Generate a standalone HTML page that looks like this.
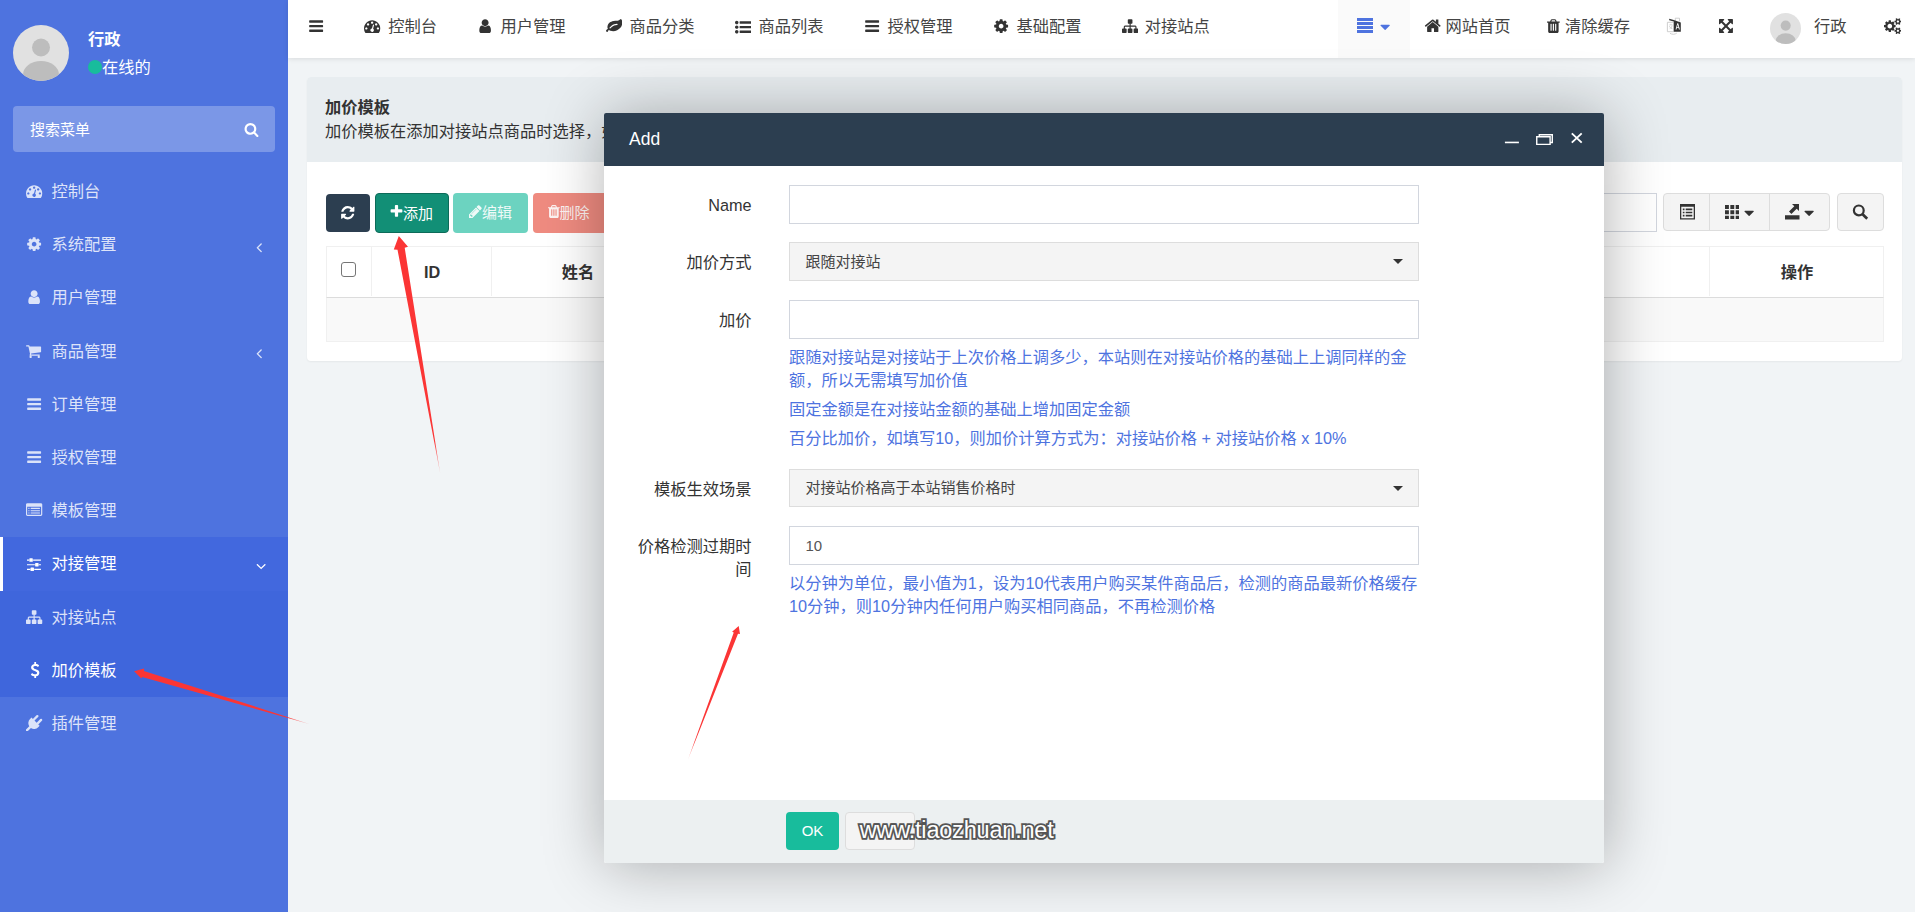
<!DOCTYPE html>
<html lang="zh-CN">
<head>
<meta charset="utf-8">
<title>加价模板</title>
<style>
*{box-sizing:border-box;}
html,body{margin:0;padding:0;}
body{width:1915px;height:912px;overflow:hidden;position:relative;background:#f1f4f6;
  font-family:"Liberation Sans","Noto Sans CJK SC",sans-serif;font-size:16.25px;color:#333;}
svg{display:block;}
.abs{position:absolute;}
.t{position:absolute;white-space:nowrap;}
/* ---------- sidebar ---------- */
#sidebar{position:absolute;left:0;top:0;width:288px;height:912px;background:#4e73df;color:#fff;}
#avatar{position:absolute;left:13px;top:25px;width:56px;height:56px;border-radius:50%;background:#e1e1e1;overflow:hidden;}
#uname{position:absolute;left:88px;top:28px;font-weight:bold;font-size:16.25px;line-height:22px;color:#fff;}
#ustat{position:absolute;left:88px;top:56px;font-size:16.25px;line-height:22px;color:#fff;white-space:nowrap;}
#ustat i{position:absolute;left:0;top:4px;width:14px;height:14px;border-radius:50%;background:#18bc9c;}
#ustat span{position:absolute;left:14px;top:0;}
#msearch{position:absolute;left:13px;top:106px;width:262px;height:46px;border-radius:4px;background:rgba(255,255,255,0.26);}
#msearch span{position:absolute;left:17px;top:13.600px;font-size:15px;line-height:20px;color:#fff;}
#menu{position:absolute;left:0;top:165px;width:288px;margin:0;padding:0;list-style:none;}
#menu li{position:relative;height:53.2px;line-height:53.2px;font-size:16.25px;color:rgba(255,255,255,0.82);padding-left:51.500px;white-space:nowrap;}
#menu li.act{background:#4268de;color:#fff;}
#menu li.act:before{content:"";position:absolute;left:0;top:0;width:3px;height:100%;background:#fff;}
#menu li.sub{background:#3f66dc;}
#menu li.cur{color:#fff;}
/* ---------- top nav ---------- */
#topnav{position:absolute;left:288px;top:0;width:1627px;height:58px;background:#fff;box-shadow:0 1px 5px rgba(0,0,0,0.1);}
.it{position:absolute;top:0;height:54px;line-height:52.800px;font-size:16.25px;color:#444;white-space:nowrap;}
/* ---------- panel ---------- */
#panel{position:absolute;left:307px;top:77px;width:1595px;height:284px;background:#fff;border-radius:4px;box-shadow:0 1px 2px rgba(0,0,0,0.05);}
#phead{position:absolute;left:0;top:0;width:100%;height:85px;background:#e8edf0;border-radius:4px 4px 0 0;}
#phead b{position:absolute;left:18px;top:19px;font-size:16.25px;line-height:22px;color:#333;}
#phead span{position:absolute;left:18px;top:43px;font-size:16.25px;line-height:22px;color:#333;white-space:nowrap;}
.btn{position:absolute;border-radius:4px;color:#fff;font-size:15px;white-space:nowrap;}
.btn span{position:absolute;top:0;line-height:40px;}
.tb{position:absolute;top:193px;height:38px;background:#f4f4f4;border:1px solid #ddd;}
.th{position:absolute;top:247px;height:50px;line-height:51px;font-weight:bold;font-size:16.25px;color:#333;text-align:center;}
/* ---------- modal ---------- */
#modal{position:absolute;left:604px;top:113px;width:1000px;height:750px;background:#fff;border-radius:2px;
  box-shadow:1.25px 1.25px 62px rgba(0,0,0,0.3);}
#mtitle{position:absolute;left:0;top:0;width:1000px;height:52.5px;background:#2c3e50;color:#fff;border-radius:2px 2px 0 0;}
#mtitle span{position:absolute;left:25px;top:0;line-height:52px;font-size:17.5px;color:#fff;}
#mfoot{position:absolute;left:0;top:687px;width:1000px;height:63px;background:#ecf0f1;border-radius:0 0 2px 2px;}
.lab{position:absolute;left:0;width:147.5px;text-align:right;font-size:16.25px;line-height:23.2px;color:#333;}
.inp{position:absolute;left:185px;width:630px;height:39px;border:1px solid #d2d6de;background:#fff;font-size:15px;line-height:37px;padding-left:15.5px;color:#555;}
.inp.sel{background:#f4f4f4;border-color:#ddd;color:#444;}
.inp.sel:after{content:"";position:absolute;right:15px;top:16px;border:5.5px solid transparent;border-top:5.5px solid #333;border-bottom:0;}
.help{position:absolute;left:185px;width:636px;font-size:16.25px;line-height:23.2px;color:#4e73df;}
#ok{position:absolute;left:182px;top:12px;width:53px;height:38px;background:#18bc9c;border-radius:4px;color:#fff;font-size:15px;line-height:38px;text-align:center;}
#reset{position:absolute;left:240.5px;top:12px;width:70px;height:37.5px;background:#f4f4f4;border:1px solid #ddd;border-radius:4px;}
#wm{position:absolute;left:255.700px;top:13.700px;font-size:23.5px;line-height:32px;color:#fff;white-space:nowrap;
  -webkit-text-stroke:3.6px #555;paint-order:stroke fill;letter-spacing:-0.2px;}
#arrows{position:absolute;left:0;top:0;width:1915px;height:912px;pointer-events:none;}
</style>
</head>
<body>

<!-- SIDEBAR -->
<div id="sidebar">
  <div id="avatar">
    <svg width="56" height="56" viewBox="0 0 56 56"><circle cx="28" cy="22.5" r="9" fill="#bdbdbd"/><ellipse cx="28" cy="50" rx="18" ry="14" fill="#bdbdbd"/></svg>
  </div>
  <div id="uname">行政</div>
  <div id="ustat"><i></i><span>在线的</span></div>
  <div id="msearch"><span>搜索菜单</span><svg class="fa" style="position:absolute;left:230.5px;top:15.5px;" width="15" height="15" viewBox="0 0 1792 1792"><path fill="#fff" d="M1216 832q0-185-131.500-316.500t-316.500-131.500-316.500 131.500-131.500 316.500 131.500 316.500 316.500 131.500 316.500-131.500 131.500-316.500zM1728 1664q0 52-38 90t-90 38q-54 0-90-38l-343-342q-179 124-399 124-143 0-273.500-55.500t-225-150-150-225-55.500-273.500 55.500-273.500 150-225 225-150 273.500-55.500 273.500 55.500 225 150 150 225 55.500 273.500q0 220-124 399l343 343q37 37 37 90z"/></svg></div>
  <ul id="menu">
    <li><svg class="fa" style="position:absolute;left:26.3px;top:18px;" width="16.25" height="16.25" viewBox="0 0 1792 1792"><path fill="#dbe3f9" d="M384 1152q0-53-37.500-90.500t-90.500-37.500-90.500 37.500-37.500 90.500 37.500 90.500 90.500 37.500 90.500-37.500 37.500-90.500zM576 704q0-53-37.500-90.500t-90.500-37.500-90.500 37.500-37.500 90.500 37.500 90.500 90.500 37.500 90.500-37.500 37.500-90.500zM1004 1185l101-382q6-26-7.500-48.500t-38.500-29.500-48 6.500-30 39.500l-101 382q-60 5-107 43.500t-63 98.500q-20 77 20 146t117 89 146-20 89-117q16-60-6-117t-72-91zM1664 1152q0-53-37.500-90.500t-90.500-37.500-90.500 37.500-37.500 90.500 37.500 90.500 90.500 37.500 90.500-37.500 37.500-90.500zM1024 512q0-53-37.500-90.500t-90.500-37.500-90.500 37.500-37.500 90.500 37.500 90.500 90.500 37.500 90.500-37.500 37.500-90.500zM1472 704q0-53-37.500-90.500t-90.500-37.500-90.500 37.500-37.500 90.500 37.500 90.500 90.500 37.500 90.500-37.500 37.500-90.500zM1792 1152q0 261-141 483-19 29-54 29h-1402q-35 0-54-29-141-221-141-483 0-182 71-348t191-286 286-191 348-71 348 71 286 191 191 286 71 348z"/></svg>控制台</li>
    <li><svg class="fa" style="position:absolute;left:26.3px;top:18px;" width="16.25" height="16.25" viewBox="0 0 1792 1792"><path fill="#dbe3f9" d="M1152 896q0-106-75-181t-181-75-181 75-75 181 75 181 181 75 181-75 75-181zM1664 787v222q0 12-8 23t-20 13l-185 28q-19 54-39 91 35 50 107 138 10 12 10 25t-9 23q-27 37-99 108t-94 71q-12 0-26-9l-138-108q-44 23-91 38-16 136-29 186-7 28-36 28h-222q-14 0-24.500-8.500t-11.500-21.500l-28-184q-49-16-90-37l-141 107q-10 9-25 9-14 0-25-11-126-114-165-168-7-10-7-23 0-12 8-23 15-21 51-66.500t54-70.500q-27-50-41-99l-183-27q-13-2-21-12.500t-8-23.500v-222q0-12 8-23t19-13l186-28q14-46 39-92-40-57-107-138-10-12-10-24 0-10 9-23 26-36 98.500-107.500t94.500-71.500q13 0 26 10l138 107q44-23 91-38 16-136 29-186 7-28 36-28h222q14 0 24.500 8.500t11.500 21.500l28 184q49 16 90 37l142-107q9-9 24-9 13 0 25 10 129 119 165 170 7 8 7 22 0 12-8 23-15 21-51 66.500t-54 70.500q26 50 41 98l183 28q13 2 21 12.500t8 23.500z"/></svg>系统配置<svg class="fa" style="position:absolute;left:251.300px;top:20.800px;" width="16.25" height="16.25" viewBox="0 0 1792 1792"><path fill="#dbe3f9" d="M1203 544q0 13-10 23l-393 393 393 393q10 10 10 23t-10 23l-50 50q-10 10-23 10t-23-10l-466-466q-10-10-10-23t10-23l466-466q10-10 23-10t23 10l50 50q10 10 10 23z"/></svg></li>
    <li><svg class="fa" style="position:absolute;left:26.3px;top:18px;" width="16.25" height="16.25" viewBox="0 0 1792 1792"><path fill="#dbe3f9" d="M1536 1399q0 109-62.500 187t-150.500 78h-854q-88 0-150.500-78t-62.500-187q0-85 8.500-160.500t31.500-152 58.500-131 94-89 134.500-34.500q131 128 313 128t313-128q76 0 134.500 34.500t94 89 58.500 131 31.500 152 8.500 160.500zM1280 512q0 159-112.500 271.500t-271.500 112.500-271.500-112.500-112.500-271.500 112.500-271.500 271.500-112.500 271.500 112.500 112.500 271.500z"/></svg>用户管理</li>
    <li><svg class="fa" style="position:absolute;left:26.3px;top:18px;" width="16.25" height="16.25" viewBox="0 0 1792 1792"><path fill="#dbe3f9" d="M640 1536q0 52-38 90t-90 38-90-38-38-90 38-90 90-38 90 38 38 90zM1536 1536q0 52-38 90t-90 38-90-38-38-90 38-90 90-38 90 38 38 90zM1664 448v512q0 24-16.500 42.500t-40.500 21.500l-1044 122q13 60 13 70 0 16-24 64h920q26 0 45 19t19 45-19 45-45 19h-1024q-26 0-45-19t-19-45q0-11 8-31.500t16-36 21.500-40 15.500-29.500l-177-823h-204q-26 0-45-19t-19-45 19-45 45-19h256q16 0 28.500 6.500t19.500 15.500 13 24.500 8 26 5.500 29.500 4.500 26h1201q26 0 45 19t19 45z"/></svg>商品管理<svg class="fa" style="position:absolute;left:251.300px;top:20.800px;" width="16.25" height="16.25" viewBox="0 0 1792 1792"><path fill="#dbe3f9" d="M1203 544q0 13-10 23l-393 393 393 393q10 10 10 23t-10 23l-50 50q-10 10-23 10t-23-10l-466-466q-10-10-10-23t10-23l466-466q10-10 23-10t23 10l50 50q10 10 10 23z"/></svg></li>
    <li><svg class="fa" style="position:absolute;left:26.3px;top:18px;" width="16.25" height="16.25" viewBox="0 0 1792 1792"><path fill="#dbe3f9" d="M1664 1344v128q0 26-19 45t-45 19H192q-26 0-45-19t-19-45v-128q0-26 19-45t45-19h1408q26 0 45 19t19 45zm0-512v128q0 26-19 45t-45 19H192q-26 0-45-19t-19-45V832q0-26 19-45t45-19h1408q26 0 45 19t19 45zm0-512v128q0 26-19 45t-45 19H192q-26 0-45-19t-19-45V320q0-26 19-45t45-19h1408q26 0 45 19t19 45z"/></svg>订单管理</li>
    <li><svg class="fa" style="position:absolute;left:26.3px;top:18px;" width="16.25" height="16.25" viewBox="0 0 1792 1792"><path fill="#dbe3f9" d="M1664 1344v128q0 26-19 45t-45 19H192q-26 0-45-19t-19-45v-128q0-26 19-45t45-19h1408q26 0 45 19t19 45zm0-512v128q0 26-19 45t-45 19H192q-26 0-45-19t-19-45V832q0-26 19-45t45-19h1408q26 0 45 19t19 45zm0-512v128q0 26-19 45t-45 19H192q-26 0-45-19t-19-45V320q0-26 19-45t45-19h1408q26 0 45 19t19 45z"/></svg>授权管理</li>
    <li><svg class="fa" style="position:absolute;left:26.3px;top:18px;" width="16.25" height="16.25" viewBox="0 0 1792 1792"><path fill="#dbe3f9" d="M384 1184v64q0 13-9.500 22.500t-22.500 9.500h-64q-13 0-22.500-9.500t-9.500-22.500v-64q0-13 9.500-22.500t22.500-9.500h64q13 0 22.500 9.500t9.500 22.500zM384 928v64q0 13-9.500 22.500t-22.500 9.500h-64q-13 0-22.500-9.500t-9.500-22.500v-64q0-13 9.500-22.500t22.500-9.500h64q13 0 22.500 9.500t9.500 22.500zM384 672v64q0 13-9.500 22.500t-22.500 9.500h-64q-13 0-22.500-9.500t-9.500-22.500v-64q0-13 9.500-22.500t22.500-9.500h64q13 0 22.500 9.500t9.500 22.500zM1536 1184v64q0 13-9.500 22.500t-22.500 9.500h-960q-13 0-22.500-9.500t-9.500-22.500v-64q0-13 9.500-22.500t22.500-9.500h960q13 0 22.500 9.500t9.500 22.500zM1536 928v64q0 13-9.500 22.500t-22.500 9.500h-960q-13 0-22.500-9.500t-9.500-22.500v-64q0-13 9.500-22.500t22.500-9.500h960q13 0 22.500 9.500t9.500 22.500zM1536 672v64q0 13-9.500 22.500t-22.500 9.500h-960q-13 0-22.500-9.500t-9.500-22.500v-64q0-13 9.500-22.500t22.500-9.500h960q13 0 22.500 9.500t9.500 22.500zM1664 1376v-832q0-13-9.500-22.500t-22.500-9.500h-1472q-13 0-22.500 9.500t-9.500 22.500v832q0 13 9.500 22.500t22.500 9.500h1472q13 0 22.500-9.500t9.500-22.500zM1792 288v1088q0 66-47 113t-113 47h-1472q-66 0-113-47t-47-113v-1088q0-66 47-113t113-47h1472q66 0 113 47t47 113z"/></svg>模板管理</li>
    <li class="act"><svg class="fa" style="position:absolute;left:26.800px;top:18.5px;" width="16.25" height="16.25" viewBox="0 0 1792 1792"><path fill="#fff" d="M352 1408v128h-352v-128h352zM704 1280q26 0 45 19t19 45v256q0 26-19 45t-45 19h-256q-26 0-45-19t-19-45v-256q0-26 19-45t45-19h256zM864 896v128h-864v-128h864zM224 384v128h-224v-128h224zM1536 1408v128h-736v-128h736zM576 256q26 0 45 19t19 45v256q0 26-19 45t-45 19h-256q-26 0-45-19t-19-45v-256q0-26 19-45t45-19h256zM1216 768q26 0 45 19t19 45v256q0 26-19 45t-45 19h-256q-26 0-45-19t-19-45v-256q0-26 19-45t45-19h256zM1536 896v128h-224v-128h224zM1536 384v128h-864v-128h864z"/></svg>对接管理<svg class="fa" style="position:absolute;left:252.800px;top:20.400px;" width="16.25" height="16.25" viewBox="0 0 1792 1792"><path fill="#fff" d="M1395 736q0 13-10 23l-466 466q-10 10-23 10t-23-10l-466-466q-10-10-10-23t10-23l50-50q10-10 23-10t23 10l393 393 393-393q10-10 23-10t23 10l50 50q10 10 10 23z"/></svg></li>
    <li class="sub"><svg class="fa" style="position:absolute;left:26.3px;top:18px;" width="16.25" height="16.25" viewBox="0 0 1792 1792"><path fill="#dbe3f9" d="M1792 1248v320q0 40-28 68t-68 28h-320q-40 0-68-28t-28-68v-320q0-40 28-68t68-28h96v-192h-512v192h96q40 0 68 28t28 68v320q0 40-28 68t-68 28h-320q-40 0-68-28t-28-68v-320q0-40 28-68t68-28h96v-192h-512v192h96q40 0 68 28t28 68v320q0 40-28 68t-68 28h-320q-40 0-68-28t-28-68v-320q0-40 28-68t68-28h96v-192q0-52 38-90t90-38h512v-192h-96q-40 0-68-28t-28-68v-320q0-40 28-68t68-28h320q40 0 68 28t28 68v320q0 40-28 68t-68 28h-96v192h512q52 0 90 38t38 90v192h96q40 0 68 28t28 68z"/></svg>对接站点</li>
    <li class="sub cur"><svg class="fa" style="position:absolute;left:27px;top:18.5px;" width="16.25" height="16.25" viewBox="0 0 1792 1792"><path fill="#fff" d="M1362 1185q0 153-99.500 263.500t-258.500 136.500v175q0 14-9 23t-23 9h-135q-13 0-22.500-9.500t-9.500-22.500v-175q-66-9-127.500-31t-101.500-44.500-74-48-46.500-37.500-17.500-18q-17-21-2-41l103-135q7-10 23-12 15-2 24 9l2 2q113 99 243 125 37 8 74 8 81 0 142.500-43t61.500-122q0-28-15-53t-33.500-42-58.500-37.500-66-32-80-32.500q-39-16-61.500-25t-61.500-26.500-62.500-31-56.500-35.500-53.500-42.500-43.500-49-35.500-58-21-66.500-8.500-78q0-138 98-242t255-134v-180q0-13 9.500-22.500t22.500-9.500h135q14 0 23 9t9 23v176q57 6 110.500 23t87 33.500 63.500 37.500 39 29 15 14q17 18 5 38l-81 146q-8 15-23 16-14 3-27-7-3-3-14.500-12t-39-26.500-58.500-32-74.500-26-85.500-11.500q-95 0-155 43t-60 111q0 26 8.500 48t29.500 41.500 39.500 33 56 31 60.500 27 70 27.500q53 20 81 31.500t76 35 75.500 42.500 62 50 53 63.500 31.500 76.500 13 94z"/></svg>加价模板</li>
    <li><svg class="fa" style="position:absolute;left:26.3px;top:18px;" width="16.25" height="16.25" viewBox="0 0 1792 1792"><path fill="#dbe3f9" d="M1755 453q37 38 37 90.500t-37 90.500l-401 400 150 150-160 160q-163 163-389.500 186.500t-411.500-100.500l-362 362h-181v-181l362-362q-124-185-100.500-411.500t186.500-389.500l160-160 150 150 400-401q38-37 91-37t90 37 37 90.500-37 90.500l-400 401 234 234 401-400q38-37 91-37t90 37z"/></svg>插件管理</li>
  </ul>
</div>

<!-- TOP NAV -->
<div id="topnav">
  <svg class="fa" style="position:absolute;left:19.5px;top:17.800px;" width="16.25" height="16.25" viewBox="0 0 1792 1792"><path fill="#333" d="M1664 1344v128q0 26-19 45t-45 19H192q-26 0-45-19t-19-45v-128q0-26 19-45t45-19h1408q26 0 45 19t19 45zm0-512v128q0 26-19 45t-45 19H192q-26 0-45-19t-19-45V832q0-26 19-45t45-19h1408q26 0 45 19t19 45zm0-512v128q0 26-19 45t-45 19H192q-26 0-45-19t-19-45V320q0-26 19-45t45-19h1408q26 0 45 19t19 45z"/></svg>
  <svg class="fa" style="position:absolute;left:76.3px;top:18.200px;" width="16.25" height="16.25" viewBox="0 0 1792 1792"><path fill="#333" d="M384 1152q0-53-37.500-90.500t-90.500-37.500-90.500 37.500-37.500 90.500 37.500 90.500 90.500 37.500 90.500-37.500 37.500-90.500zM576 704q0-53-37.500-90.500t-90.500-37.500-90.500 37.500-37.500 90.500 37.500 90.500 90.500 37.500 90.500-37.500 37.500-90.500zM1004 1185l101-382q6-26-7.500-48.500t-38.500-29.500-48 6.500-30 39.500l-101 382q-60 5-107 43.500t-63 98.500q-20 77 20 146t117 89 146-20 89-117q16-60-6-117t-72-91zM1664 1152q0-53-37.500-90.500t-90.500-37.500-90.500 37.500-37.500 90.500 37.500 90.500 90.500 37.500 90.500-37.500 37.500-90.500zM1024 512q0-53-37.500-90.500t-90.500-37.500-90.500 37.500-37.500 90.500 37.500 90.500 90.500 37.500 90.500-37.500 37.500-90.500zM1472 704q0-53-37.500-90.500t-90.500-37.500-90.500 37.500-37.500 90.500 37.500 90.500 90.500 37.500 90.500-37.500 37.500-90.500zM1792 1152q0 261-141 483-19 29-54 29h-1402q-35 0-54-29-141-221-141-483 0-182 71-348t191-286 286-191 348-71 348 71 286 191 191 286 71 348z"/></svg><div class="it" style="left:100.3px">控制台</div>
  <svg class="fa" style="position:absolute;left:188.900px;top:18.200px;" width="16.25" height="16.25" viewBox="0 0 1792 1792"><path fill="#333" d="M1536 1399q0 109-62.500 187t-150.500 78h-854q-88 0-150.500-78t-62.500-187q0-85 8.500-160.500t31.500-152 58.500-131 94-89 134.500-34.500q131 128 313 128t313-128q76 0 134.500 34.500t94 89 58.500 131 31.500 152 8.500 160.500zM1280 512q0 159-112.500 271.500t-271.500 112.500-271.500-112.500-112.500-271.500 112.500-271.500 271.500-112.500 271.500 112.500 112.500 271.500z"/></svg><div class="it" style="left:212.6px">用户管理</div>
  <svg class="fa" style="position:absolute;left:318.2px;top:18.200px;" width="16.25" height="16.25" viewBox="0 0 1792 1792"><path fill="#333" d="M1280 704q0-26-19-45t-45-19q-172 0-318 49.500t-259.500 134-235.500 219.500q-19 21-19 45 0 26 19 45t45 19q24 0 45-19 27-24 74-71t67-66q137-124 268.500-176t313.500-52q26 0 45-19t19-45zM1792 506q0 95-20 193-46 224-184.500 383t-357.500 268q-214 108-438 108-148 0-286-47-15-5-88-42t-96-37q-16 0-39.500 32t-45 70-52.500 70-60 32q-43 0-63.500-17.500t-45.500-59.500q-2-4-6-11t-5.500-10-3-9.500-1.500-13.500q0-35 31-73.500t68-65.500 68-56 31-48q0-4-14-38t-16-44q-9-51-9-104 0-115 43.500-220t119-184.500 170.500-139 204-95.500q55-18 145-25.500t179.500-9 178.500-6 163.500-24 113.500-56.500l29.500-29.500t29.500-28 27-20 36.500-16 43.500-4.500q39 0 70.500 46t47.500 112 24 124 8 96z"/></svg><div class="it" style="left:341.6px">商品分类</div>
  <svg class="fa" style="position:absolute;left:447.2px;top:18.800px;" width="16.25" height="16.25" viewBox="0 0 1792 1792"><path fill="#333" d="M384 1408q0 80-56 136t-136 56-136-56-56-136 56-136 136-56 136 56 56 136zM384 896q0 80-56 136t-136 56-136-56-56-136 56-136 136-56 136 56 56 136zM1792 1312v192q0 13-9.500 22.500t-22.500 9.500h-1216q-13 0-22.500-9.500t-9.500-22.500v-192q0-13 9.500-22.500t22.500-9.500h1216q13 0 22.500 9.500t9.500 22.500zM384 384q0 80-56 136t-136 56-136-56-56-136 56-136 136-56 136 56 56 136zM1792 800v192q0 13-9.500 22.500t-22.500 9.500h-1216q-13 0-22.500-9.500t-9.500-22.500v-192q0-13 9.500-22.500t22.500-9.500h1216q13 0 22.500 9.500t9.500 22.500zM1792 288v192q0 13-9.500 22.500t-22.500 9.500h-1216q-13 0-22.500-9.500t-9.500-22.500v-192q0-13 9.500-22.500t22.500-9.500h1216q13 0 22.500 9.500t9.500 22.500z"/></svg><div class="it" style="left:470.6px">商品列表</div>
  <svg class="fa" style="position:absolute;left:576px;top:18.200px;" width="16.25" height="16.25" viewBox="0 0 1792 1792"><path fill="#333" d="M1664 1344v128q0 26-19 45t-45 19H192q-26 0-45-19t-19-45v-128q0-26 19-45t45-19h1408q26 0 45 19t19 45zm0-512v128q0 26-19 45t-45 19H192q-26 0-45-19t-19-45V832q0-26 19-45t45-19h1408q26 0 45 19t19 45zm0-512v128q0 26-19 45t-45 19H192q-26 0-45-19t-19-45V320q0-26 19-45t45-19h1408q26 0 45 19t19 45z"/></svg><div class="it" style="left:599.5px">授权管理</div>
  <svg class="fa" style="position:absolute;left:704.7px;top:18.200px;" width="16.25" height="16.25" viewBox="0 0 1792 1792"><path fill="#333" d="M1152 896q0-106-75-181t-181-75-181 75-75 181 75 181 181 75 181-75 75-181zM1664 787v222q0 12-8 23t-20 13l-185 28q-19 54-39 91 35 50 107 138 10 12 10 25t-9 23q-27 37-99 108t-94 71q-12 0-26-9l-138-108q-44 23-91 38-16 136-29 186-7 28-36 28h-222q-14 0-24.500-8.500t-11.500-21.500l-28-184q-49-16-90-37l-141 107q-10 9-25 9-14 0-25-11-126-114-165-168-7-10-7-23 0-12 8-23 15-21 51-66.500t54-70.500q-27-50-41-99l-183-27q-13-2-21-12.500t-8-23.500v-222q0-12 8-23t19-13l186-28q14-46 39-92-40-57-107-138-10-12-10-24 0-10 9-23 26-36 98.500-107.500t94.500-71.500q13 0 26 10l138 107q44-23 91-38 16-136 29-186 7-28 36-28h222q14 0 24.500 8.500t11.500 21.500l28 184q49 16 90 37l142-107q9-9 24-9 13 0 25 10 129 119 165 170 7 8 7 22 0 12-8 23-15 21-51 66.500t-54 70.500q26 50 41 98l183 28q13 2 21 12.500t8 23.500z"/></svg><div class="it" style="left:728.5px">基础配置</div>
  <svg class="fa" style="position:absolute;left:833.7px;top:18.200px;" width="16.25" height="16.25" viewBox="0 0 1792 1792"><path fill="#333" d="M1792 1248v320q0 40-28 68t-68 28h-320q-40 0-68-28t-28-68v-320q0-40 28-68t68-28h96v-192h-512v192h96q40 0 68 28t28 68v320q0 40-28 68t-68 28h-320q-40 0-68-28t-28-68v-320q0-40 28-68t68-28h96v-192h-512v192h96q40 0 68 28t28 68v320q0 40-28 68t-68 28h-320q-40 0-68-28t-28-68v-320q0-40 28-68t68-28h96v-192q0-52 38-90t90-38h512v-192h-96q-40 0-68-28t-28-68v-320q0-40 28-68t68-28h320q40 0 68 28t28 68v320q0 40-28 68t-68 28h-96v192h512q52 0 90 38t38 90v192h96q40 0 68 28t28 68z"/></svg><div class="it" style="left:856.8px">对接站点</div>
  <div class="abs" style="left:1050px;top:0;width:72px;height:57.500px;background:#fafafa"></div>
  <svg class="abs" style="left:1069px;top:18px" width="16" height="15" viewBox="0 0 16 15"><path fill="#4e73df" d="M0 0h16v3.050H0zM0 3.980h16v3.050H0zM0 7.960h16v3.050H0zM0 11.950h16v3.050H0z"/></svg>
  <svg class="fa" style="position:absolute;left:1088.5px;top:18.5px;" width="16.25" height="16.25" viewBox="0 0 1792 1792"><path fill="#4e73df" d="M1408 704q0 26-19 45l-448 448q-19 19-45 19t-45-19l-448-448q-19-19-19-45t19-45 45-19h896q26 0 45 19t19 45z"/></svg>
  <svg class="fa" style="position:absolute;left:1135.700px;top:16.500px;" width="17.5" height="17.5" viewBox="0 0 1792 1792"><path fill="#333" d="M1472 992v480q0 26-19 45t-45 19h-384v-384h-256v384h-384q-26 0-45-19t-19-45v-480q0-1 .5-3t.5-3l575-474 575 474q1 2 1 6zM1695 923l-62 74q-8 9-21 11h-3q-13 0-21-7l-692-577-692 577q-12 8-24 7-13-2-21-11l-62-74q-8-10-7-23.500t11-21.500l719-599q32-26 76-26t76 26l244 204v-195q0-14 9-23t23-9h192q14 0 23 9t9 23v408l219 182q10 8 11 21.500t-7 23.500z"/></svg><div class="it" style="left:1157.5px">网站首页</div>
  <svg class="fa" style="position:absolute;left:1259px;top:18.200px;" width="16.25" height="16.25" viewBox="0 0 1792 1792"><path fill="#333" d="M512 1376v-704q0-14-9-23t-23-9h-64q-14 0-23 9t-9 23v704q0 14 9 23t23 9h64q14 0 23-9t9-23zm256 0v-704q0-14-9-23t-23-9h-64q-14 0-23 9t-9 23v704q0 14 9 23t23 9h64q14 0 23-9t9-23zm256 0v-704q0-14-9-23t-23-9h-64q-14 0-23 9t-9 23v704q0 14 9 23t23 9h64q14 0 23-9t9-23zm-544-992h448l-48-117q-7-9-17-11h-317q-10 2-17 11zm928 32v64q0 14-9 23t-23 9h-96v948q0 83-47 143.500t-113 60.500h-832q-66 0-113-58.500t-47-141.500v-952h-96q-14 0-23-9t-9-23v-64q0-14 9-23t23-9h309l70-167q15-37 54-63t79-26h320q40 0 79 26t54 63l70 167h309q14 0 23 9t9 23z"/></svg><div class="it" style="left:1277px">清除缓存</div>
  <!-- language icon -->
  <svg class="abs" style="left:1378px;top:17px" width="17" height="19" viewBox="0 0 17 19">
    <path fill="none" stroke="#c9c9c9" stroke-width="0.9" d="M1.400 5.300h6.400v9.400H1.400zM9.300 4.200V1.200h4.200v3.300M4 16.300c1.800 1.300 5 1.300 6.800-.2"/>
    <path fill="#cfcfcf" d="M3.300 7.600h3.200v.7H3.300zM4.600 6.800h.7v1.200h-.7zM3.400 11.600c1.300-.7 2.200-1.800 2.500-3.300l.7.150c-.35 1.700-1.350 3-2.850 3.800zM3.600 8.700c.5 1.300 1.500 2.300 2.900 2.800l-.3.650c-1.550-.6-2.700-1.750-3.250-3.200z"/>
    <path fill="#333" d="M3.200 1.800 7.800 3.100 14.800 5.400V14.800L7.800 14.700V4.400L3.200 3.200z"/>
    <path fill="#fff" d="M11.300 6.300h.9l1.700 6.300h-1l-.35-1.500h-1.700l-.35 1.500h-.95zM11.100 10.200h1.250l-.62-2.600z"/>
  </svg>
  <svg class="fa" style="position:absolute;left:1430.600px;top:18.900px;" width="16.25" height="16.25" viewBox="0 0 1792 1792"><path fill="#333" d="M1283 413l-355 355 355 355 144-144q29-31 70-14 39 17 39 59v448q0 26-19 45t-45 19h-448q-42 0-59-40-17-39 14-69l144-144-355-355-355 355 144 144q31 30 14 69-17 40-59 40h-448q-26 0-45-19t-19-45v-448q0-42 40-59 39-17 69 14l144 144 355-355-355-355-144 144q-19 19-45 19-12 0-24-5-40-17-40-59v-448q0-26 19-45t45-19h448q42 0 59 40 17 39-14 69l-144 144 355 355 355-355-144-144q-31-30-14-69 17-40 59-40h448q26 0 45 19t19 45v448q0 42-39 59-13 5-25 5-26 0-45-19z"/></svg>
  <div class="abs" style="left:1481.7px;top:12.7px;width:31.4px;height:31.4px;border-radius:50%;background:#e1e1e1;overflow:hidden">
    <svg width="31.4" height="31.4" viewBox="0 0 56 56"><circle cx="28" cy="22.5" r="9" fill="#bdbdbd"/><ellipse cx="28" cy="50" rx="18" ry="14" fill="#bdbdbd"/></svg>
  </div>
  <div class="it" style="left:1526px">行政</div>
  <svg class="fa" style="position:absolute;left:1595.900px;top:18.200px;" width="17.4107" height="16.25" viewBox="0 0 1920 1792"><path fill="#333" d="M896 896q0-106-75-181t-181-75-181 75-75 181 75 181 181 75 181-75 75-181zM1664 1408q0-52-38-90t-90-38-90 38-38 90q0 53 37.500 90.500t90.500 37.500 90.500-37.500 37.500-90.500zM1664 384q0-52-38-90t-90-38-90 38-38 90q0 53 37.500 90.500t90.500 37.500 90.500-37.500 37.500-90.500zM1280 805v185q0 10-7 19.500t-16 10.500l-155 24q-11 35-32 76 34 48 90 115 7 11 7 20 0 12-7 19-23 30-82.500 89.500t-78.500 59.500q-11 0-21-7l-115-90q-37 19-77 31-11 108-23 155-7 24-30 24h-186q-11 0-20-7.500t-10-17.500l-23-153q-34-10-75-31l-118 89q-7 7-20 7-11 0-21-8-144-133-144-160 0-9 7-19 10-14 41-53t47-61q-23-44-35-82l-152-24q-10-1-17-9.500t-7-19.500v-185q0-10 7-19.500t16-10.500l155-24q11-35 32-76-34-48-90-115-7-11-7-20 0-12 7-20 22-30 82-89t79-59q11 0 21 7l115 90q34-18 77-32 11-108 23-154 7-24 30-24h186q11 0 20 7.500t10 17.500l23 153q34 10 75 31l118-89q8-7 20-7 11 0 21 8 144 133 144 160 0 8-7 19-12 16-42 54t-45 60q23 48 34 82l152 23q10 2 17 10.500t7 19.500zM1920 1338v140q0 16-149 31-12 27-30 52 51 113 51 138 0 4-4 7-122 71-124 71-8 0-46-47t-52-68q-20 2-30 2t-30-2q-14 21-52 68t-46 47q-2 0-124-71-4-3-4-7 0-25 51-138-18-25-30-52-149-15-149-31v-140q0-16 149-31 13-29 30-52-51-113-51-138 0-4 4-7 4-2 35-20t59-34 30-16q8 0 46 46.500t52 67.500q20-2 30-2t30 2q51-71 92-112l6-2q4 0 124 70 4 3 4 7 0 25-51 138 17 23 30 52 149 15 149 31zM1920 314v140q0 16-149 31-12 27-30 52 51 113 51 138 0 4-4 7-122 71-124 71-8 0-46-47t-52-68q-20 2-30 2t-30-2q-14 21-52 68t-46 47q-2 0-124-71-4-3-4-7 0-25 51-138-18-25-30-52-149-15-149-31v-140q0-16 149-31 13-29 30-52-51-113-51-138 0-4 4-7 4-2 35-20t59-34 30-16q8 0 46 46.500t52 67.500q20-2 30-2t30 2q51-71 92-112l6-2q4 0 124 70 4 3 4 7 0 25-51 138 17 23 30 52 149 15 149 31z"/></svg>
</div>

<!-- PANEL -->
<div id="panel">
  <div id="phead"><b>加价模板</b><span>加价模板在添加对接站点商品时选择，如果对接站点商品价格发生变动，本站将按照模板规则调整</span></div>
</div>
<!-- toolbar buttons (body coords) -->
<div class="btn" style="left:326px;top:194px;width:44px;height:38px;background:#2c3e50"><svg class="fa" style="position:absolute;left:14px;top:11.300px;" width="15.5" height="15.5" viewBox="0 0 1792 1792"><path fill="#fff" d="M1639 1056q0 5-1 7-64 268-268 434.500t-478 166.500q-146 0-282.500-55t-243.500-157l-129 129q-19 19-45 19t-45-19-19-45v-448q0-26 19-45t45-19h448q26 0 45 19t19 45-19 45l-137 137q71 66 161 102t187 36q134 0 250-65t186-179q11-17 53-117 8-23 30-23h192q13 0 22.500 9.500t9.500 22.500zM1664 256v448q0 26-19 45t-45 19h-448q-26 0-45-19t-19-45 19-45l138-138q-148-137-349-137-134 0-250 65t-186 179q-11 17-53 117-8 23-30 23h-199q-13 0-22.500-9.500t-9.500-22.500v-7q65-268 270-434.500t480-166.500q146 0 284 55.500t245 156.500l130-129q19-19 45-19t45 19 19 45z"/></svg></div>
<div class="btn" style="left:375px;top:193px;width:74px;height:40px;background:#128f76;border:1px solid #0d6b59"><svg class="fa" style="position:absolute;left:13.400px;top:9.500px;" width="15" height="15" viewBox="0 0 1792 1792"><path fill="#fff" d="M1600 736v192q0 40-28 68t-68 28h-416v416q0 40-28 68t-68 28h-192q-40 0-68-28t-28-68v-416h-416q-40 0-68-28t-28-68v-192q0-40 28-68t68-28h416v-416q0-40 28-68t68-28h192q40 0 68 28t28 68v416h416q40 0 68 28t28 68z"/></svg><span style="left:27px;line-height:39px">添加</span></div>
<div class="btn" style="left:453px;top:193px;width:75px;height:40px;background:#6cd3c0"><svg class="fa" style="position:absolute;left:15.500px;top:11px;opacity:.9" width="15" height="15" viewBox="0 0 1792 1792"><path fill="#fff" d="M363 1536l91-91-235-235-91 91v107h128v128h107zM886 608q0-22-22-22-10 0-17 7l-542 542q-7 7-7 17 0 22 22 22 10 0 17-7l542-542q7-7 7-17zM832 416l416 416-832 832h-416v-416zM1515 512q0 53-37 90l-166 166-416-416 166-165q36-38 90-38 53 0 91 38l235 234q37 39 37 91z"/></svg><span style="left:29px;opacity:.9">编辑</span></div>
<div class="btn" style="left:533px;top:193px;width:75px;height:40px;background:#ef8b80"><svg class="fa" style="position:absolute;left:14.500px;top:10.800px;opacity:.9" width="15" height="15" viewBox="0 0 1792 1792"><path fill="#fff" d="M512 1376v-704q0-14-9-23t-23-9h-64q-14 0-23 9t-9 23v704q0 14 9 23t23 9h64q14 0 23-9t9-23zm256 0v-704q0-14-9-23t-23-9h-64q-14 0-23 9t-9 23v704q0 14 9 23t23 9h64q14 0 23-9t9-23zm256 0v-704q0-14-9-23t-23-9h-64q-14 0-23 9t-9 23v704q0 14 9 23t23 9h64q14 0 23-9t9-23zm-544-992h448l-48-117q-7-9-17-11h-317q-10 2-17 11zm928 32v64q0 14-9 23t-23 9h-96v948q0 83-47 143.500t-113 60.500h-832q-66 0-113-58.500t-47-141.500v-952h-96q-14 0-23-9t-9-23v-64q0-14 9-23t23-9h309l70-167q15-37 54-63t79-26h320q40 0 79 26t54 63l70 167h309q14 0 23 9t9 23z"/></svg><span style="left:26.500px;opacity:.9">删除</span></div>
<!-- right tools -->
<div class="tb" style="left:1497px;width:160px;background:#fff;border-color:#d2d6de;height:39px"></div>
<div class="tb" style="left:1663px;width:167px;border-radius:4px"></div>
<div class="abs" style="left:1709px;top:193px;width:1px;height:38px;background:#ddd"></div>
<div class="abs" style="left:1769px;top:193px;width:1px;height:38px;background:#ddd"></div>
<svg class="abs" style="left:1680px;top:204px" width="15" height="15.500" viewBox="0 0 15 15.500"><path fill="#333" fill-rule="evenodd" d="M0 0h15v15.500H0zM1.300 2.800v11.400h12.400V2.800z"/><path fill="#333" d="M2.800 4.600h1.700v1.600H2.800zM5.700 4.600h6.600v1.600H5.700zM2.800 7.700h1.700v1.600H2.800zM5.700 7.700h6.600v1.600H5.700zM2.800 10.800h1.700v1.600H2.800zM5.700 10.800h6.600v1.600H5.700z"/></svg>
<svg class="abs" style="left:1724.800px;top:204.800px" width="14.600" height="14.600" viewBox="0 0 14.600 14.600"><path fill="#333" d="M0 0h3.900v3.900H0zM5.350 0h3.900v3.900H5.350zM10.700 0h3.900v3.900h-3.900zM0 5.350h3.900v3.900H0zM5.350 5.350h3.900v3.900H5.350zM10.700 5.350h3.900v3.900h-3.900zM0 10.700h3.900v3.900H0zM5.350 10.700h3.900v3.900H5.350zM10.700 10.700h3.900v3.900h-3.900z"/></svg>
<svg class="fa" style="position:absolute;left:1741.200px;top:204.600px;" width="16.25" height="16.25" viewBox="0 0 1792 1792"><path fill="#333" d="M1408 704q0 26-19 45l-448 448q-19 19-45 19t-45-19l-448-448q-19-19-19-45t19-45 45-19h896q26 0 45 19t19 45z"/></svg>
<svg class="abs" style="left:1785px;top:204px" width="14.500" height="15.500" viewBox="0 0 14.500 15.500"><path fill="#333" d="M0 11.200h14.500v4.300H0zM7 0h7v7l-2.300-2.300-5.300 5.300-2.400-2.400 5.300-5.300z"/></svg>
<svg class="fa" style="position:absolute;left:1800.800px;top:204.600px;" width="16.25" height="16.25" viewBox="0 0 1792 1792"><path fill="#333" d="M1408 704q0 26-19 45l-448 448q-19 19-45 19t-45-19l-448-448q-19-19-19-45t19-45 45-19h896q26 0 45 19t19 45z"/></svg>
<div class="tb" style="left:1837px;width:47px;border-radius:4px"></div>
<svg class="abs" style="left:1851.700px;top:203.500px" width="17" height="17" viewBox="0 0 17 17"><circle cx="6.800" cy="6.400" r="4.900" fill="none" stroke="#333" stroke-width="2.200"/><path d="M10.600 10.300l4.600 4.500" stroke="#333" stroke-width="2.700" stroke-linecap="butt"/></svg>
<!-- table -->
<div class="abs" style="left:326px;top:246px;width:1558px;height:52px;border:1px solid #f0f0f0;border-bottom:1.500px solid #dcdcdc;background:#fff"></div>
<div class="abs" style="left:326px;top:298px;width:1558px;height:44px;background:#f9f9f9;border:1px solid #f0f0f0;border-top:0"></div>
<div class="abs" style="left:371px;top:247px;width:1px;height:49px;background:#f0f0f0"></div>
<div class="abs" style="left:491px;top:247px;width:1px;height:49px;background:#f0f0f0"></div>
<div class="abs" style="left:1709px;top:247px;width:1px;height:49px;background:#f0f0f0"></div>
<div class="abs" style="left:341px;top:262px;width:15px;height:15px;border:1.500px solid #767676;border-radius:3px;background:#fff"></div>
<div class="th" style="left:372px;width:120px">ID</div>
<div class="th" style="left:492px;width:172px">姓名</div>
<div class="th" style="left:1710px;width:174px">操作</div>

<!-- MODAL -->
<div id="modal">
  <div id="mtitle"><span>Add</span>
    <svg class="abs" style="left:900px;top:18px" width="80" height="16" viewBox="0 0 80 16">
      <path fill="none" stroke="#fff" stroke-width="1.600" d="M0.900 11.450h14"/>
      <path fill="none" stroke="#fff" stroke-width="1.400" d="M32.750 5.700h13.350v7.700H32.750zM35.300 5V3.800h13v7.700h-1.600"/>
      <path fill="none" stroke="#fff" stroke-width="1.900" d="M67.800 2.400l9.900 9.200M77.700 2.400l-9.900 9.200"/>
    </svg>
  </div>
  <div class="lab" style="top:80.500px">Name</div>
  <div class="inp" style="top:72px"></div>
  <div class="lab" style="top:137.500px">加价方式</div>
  <div class="inp sel" style="top:129px">跟随对接站</div>
  <div class="lab" style="top:195.500px">加价</div>
  <div class="inp" style="top:187px"></div>
  <div class="help" style="top:232.500px">跟随对接站是对接站于上次价格上调多少，本站则在对接站价格的基础上上调同样的金额，所以无需填写加价值</div>
  <div class="help" style="top:284.500px">固定金额是在对接站金额的基础上增加固定金额</div>
  <div class="help" style="top:314px">百分比加价，如填写10，则加价计算方式为：对接站价格 + 对接站价格 x 10%</div>
  <div class="lab" style="top:365px">模板生效场景</div>
  <div class="inp sel" style="top:356px;height:38px;line-height:36px">对接站价格高于本站销售价格时</div>
  <div class="lab" style="top:422px;left:28px;width:119.500px">价格检测过期时间</div>
  <div class="inp" style="top:413px">10</div>
  <div class="help" style="top:458.500px">以分钟为单位，最小值为1，设为10代表用户购买某件商品后，检测的商品最新价格缓存10分钟，则10分钟内任何用户购买相同商品，不再检测价格</div>
  <div id="mfoot">
    <div id="ok">OK</div>
    <div id="reset"></div>
    <div id="wm">www.tiaozhuan.net</div>
  </div>
</div>

<!-- ARROWS -->
<svg id="arrows" viewBox="0 0 1915 912">
  <defs>
    <linearGradient id="g1" gradientUnits="userSpaceOnUse" x1="399" y1="237" x2="440" y2="474"><stop offset="0.86" stop-color="#fb3535"/><stop offset="1" stop-color="#fb3535" stop-opacity="0.3"/></linearGradient>
    <linearGradient id="g2" gradientUnits="userSpaceOnUse" x1="134" y1="671" x2="310" y2="724"><stop offset="0.86" stop-color="#fb3535"/><stop offset="1" stop-color="#fb3535" stop-opacity="0.3"/></linearGradient>
    <linearGradient id="g3" gradientUnits="userSpaceOnUse" x1="739" y1="626" x2="687" y2="760"><stop offset="0.86" stop-color="#fb3535"/><stop offset="1" stop-color="#fb3535" stop-opacity="0.3"/></linearGradient>
  </defs>
  <!-- arrow 1: tip (398.7,237) tail (440,474) -->
  <path fill="url(#g1)" d="M398.800 236 L408 246.800 L404.700 247.800 L440.300 474 L397.500 249.700 L393.800 249.500 Z"/>
  <!-- arrow 2: tip (134,671.3) tail (310,724.300) -->
  <path fill="url(#g2)" d="M134.050 671.300 L144.200 668.400 L143.900 670.900 L310 724.200 L142.100 676.900 L141.400 678.600 Z"/>
  <!-- arrow 3: tip (739,626) tail (687.500,760) -->
  <path fill="url(#g3)" d="M738.700 625.900 L740 634.100 L738 633.800 L687.800 760 L733.750 632.500 L732.100 631.700 Z"/>
</svg>
</body>
</html>
